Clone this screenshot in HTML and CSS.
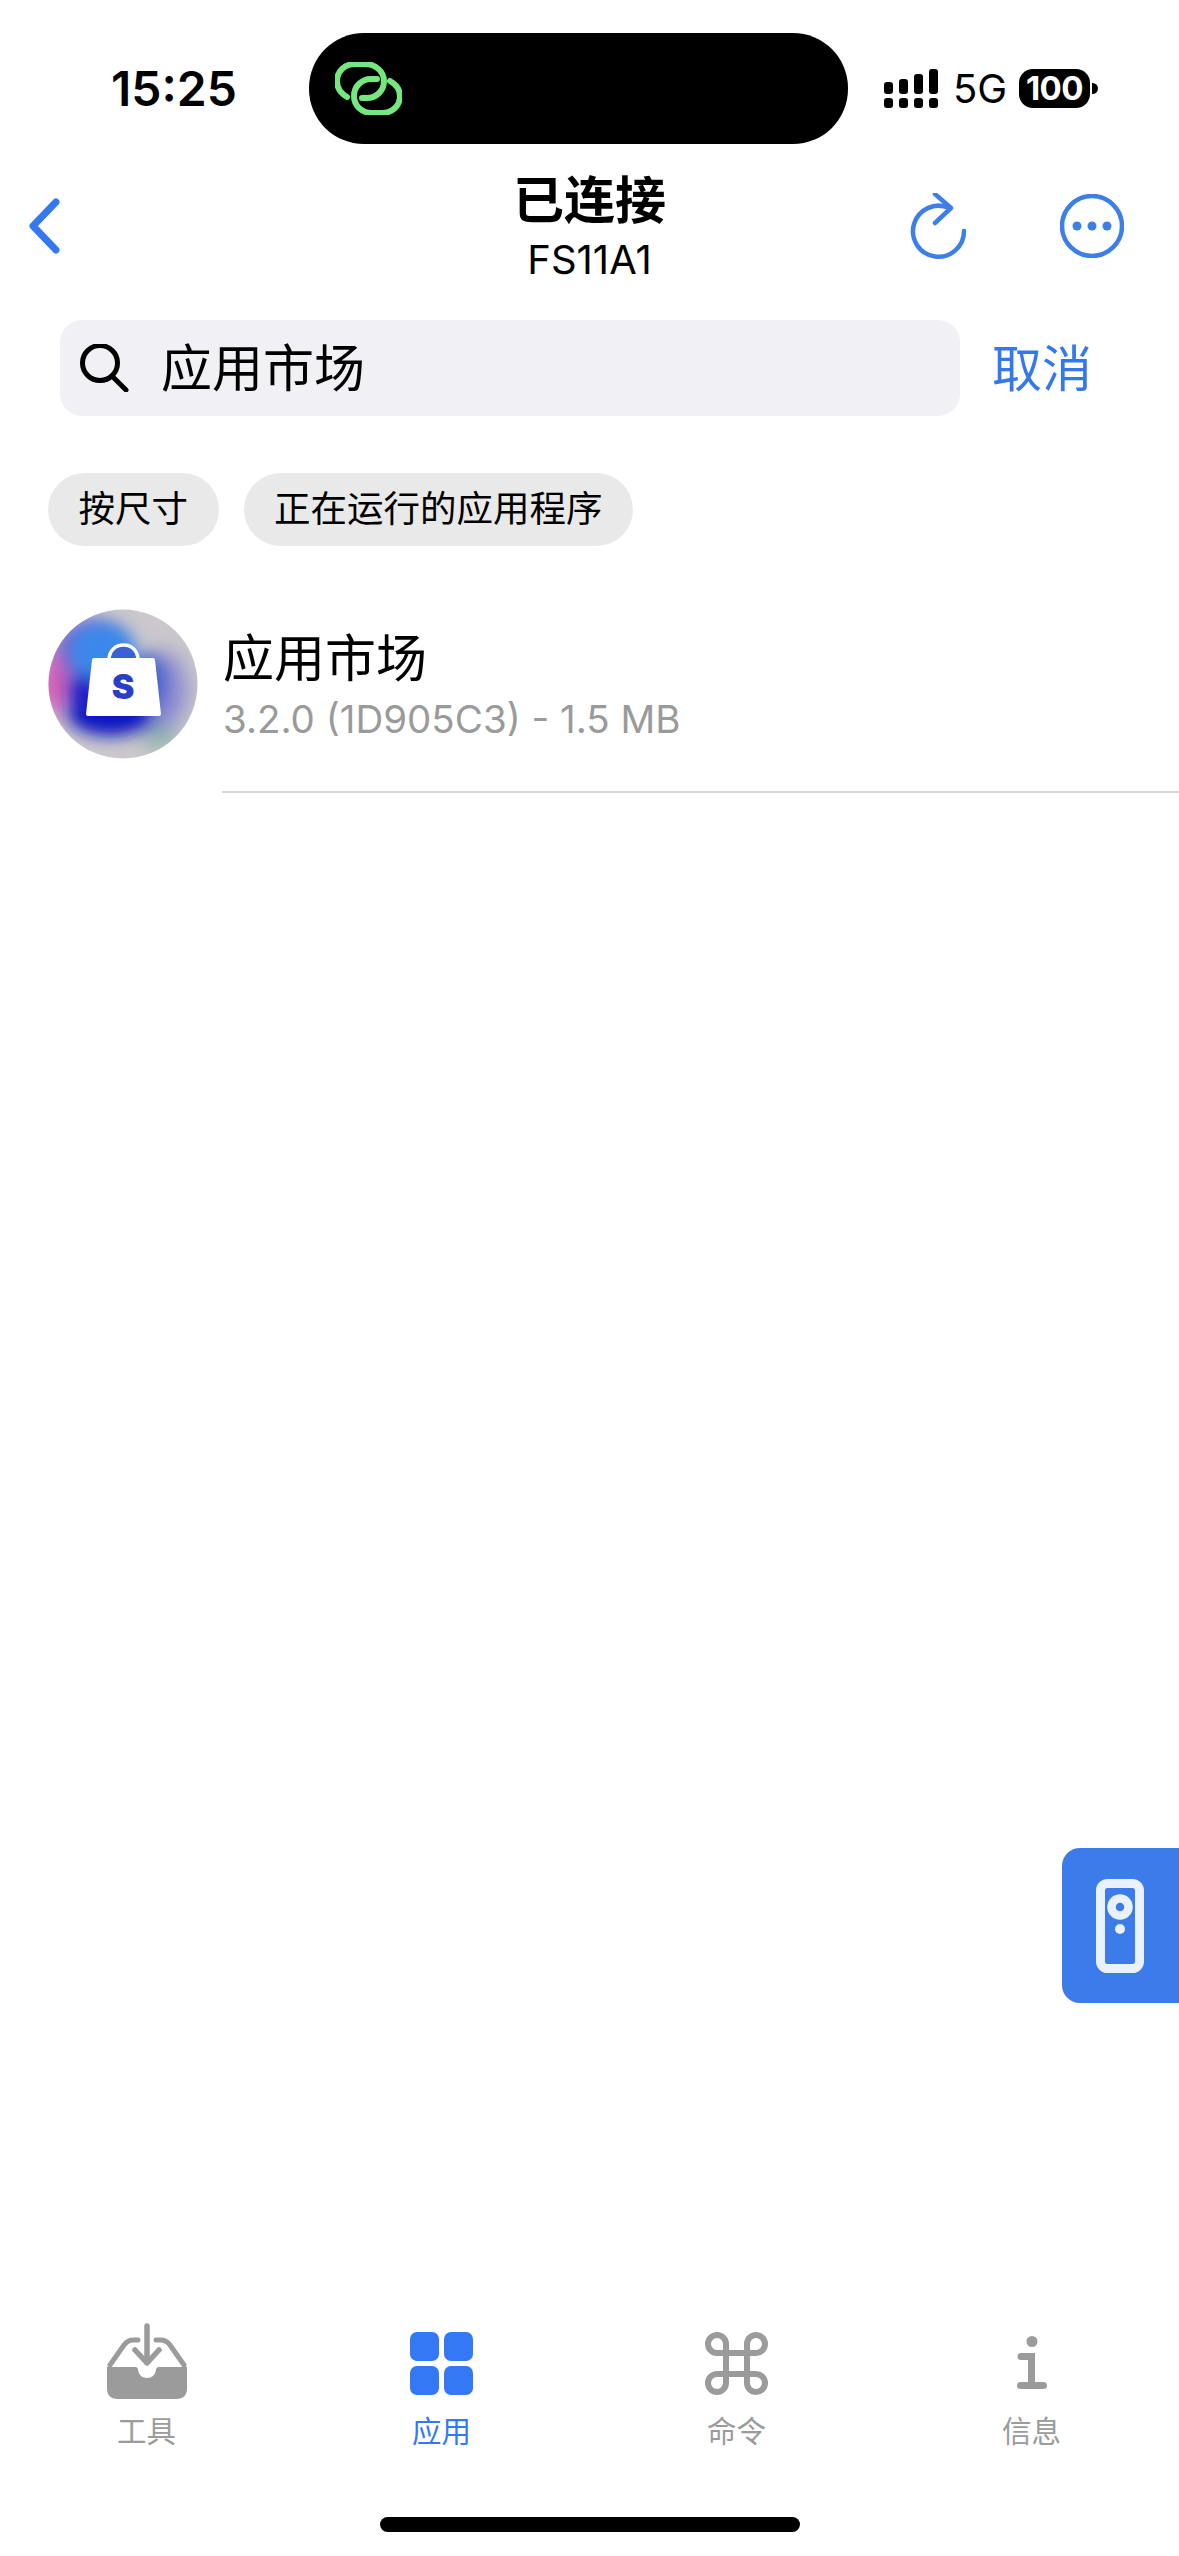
FILE: index.html
```html
<!DOCTYPE html>
<html lang="zh-CN">
<head>
<meta charset="utf-8">
<title>已连接</title>
<link rel="stylesheet" href="styles.css">
</head>
<body>
<div class="screen">
  <header class="status">
    <div class="time">15:25</div>
    <div class="island">
      <svg class="link" viewBox="335 62 67 53" width="67" height="53">
        <path d="M347 97C340 93 337 87 337 81C337 71 345 64 355 64H365C376 64 384 72 384 81C384 91 376 98 367 98H362"/>
        <path d="M390 81C397 85 400 91 400 96C400 106 392 113 382 113H372C361 113 354 105 354 96C354 86 362 79 371 79H377"/>
      </svg>
    </div>
    <div class="sys">
      <svg class="signal" viewBox="0 0 54 39" width="54" height="39">
        <rect x="0" y="29" width="9" height="10" rx="3"/><rect x="15" y="29" width="9" height="10" rx="3"/><rect x="30" y="29" width="9" height="10" rx="3"/><rect x="45" y="29" width="9" height="10" rx="3"/>
        <rect x="0" y="13" width="9" height="12" rx="3"/><rect x="15" y="10" width="9" height="15" rx="3"/><rect x="30" y="5" width="9" height="20" rx="3"/><rect x="45" y="0" width="9" height="25" rx="3"/>
      </svg>
      <span class="net">5G</span>
      <span class="batt">100</span>
      <span class="nub"></span>
    </div>
  </header>

  <nav class="nav">
    <svg class="back" viewBox="0 0 31 56" width="31" height="56"><path d="M27 4L4 28L27 52"/></svg>
    <div class="heading">
      <div class="title">已连接</div>
      <div class="device">FS11A1</div>
    </div>
    <div class="actions">
      <svg class="stroke-icon" viewBox="910 193 57 67" width="57" height="67">
        <path d="M964 231A25.500 25.500 0 1 1 949 208"/>
        <path d="M935 194L951 208L935 223"/>
      </svg>
      <svg class="stroke-icon" viewBox="0 0 64 64" width="64" height="64">
        <circle cx="32" cy="32" r="30"/>
        <circle class="dot" cx="17" cy="32" r="4.500"/><circle class="dot" cx="32" cy="32" r="4.500"/><circle class="dot" cx="47" cy="32" r="4.500"/>
      </svg>
    </div>
  </nav>

  <div class="search-row">
    <div class="search">
      <svg class="mag" viewBox="0 0 49 48" width="49" height="48">
        <circle cx="20" cy="19" r="17.500"/><path d="M32 32L46 46"/>
      </svg>
      <span class="query">应用市场</span>
    </div>
    <span class="cancel">取消</span>
  </div>

  <div class="chips">
    <span class="chip">按尺寸</span>
    <span class="chip">正在运行的应用程序</span>
  </div>

  <div class="app">
    <svg class="app-icon" viewBox="18 19 150 150" width="150" height="150">
      <defs>
        <clipPath id="disc"><circle cx="93" cy="94" r="74.500"/></clipPath>
        <filter id="b1" x="-60%" y="-60%" width="220%" height="220%"><feGaussianBlur stdDeviation="11"/></filter>
        <filter id="b2" x="-60%" y="-60%" width="220%" height="220%"><feGaussianBlur stdDeviation="8"/></filter>
      </defs>
      <g clip-path="url(#disc)">
        <rect x="18" y="19" width="150" height="150" fill="#cbc8cc"/>
        <g filter="url(#b1)">
          <ellipse cx="55" cy="72" rx="38" ry="42" fill="#7d62cc"/>
          <ellipse cx="25" cy="95" rx="17" ry="32" fill="#cf5cb8"/>
          <ellipse cx="132" cy="100" rx="25" ry="38" fill="#8584d2"/>
          <ellipse cx="128" cy="146" rx="16" ry="8" fill="#5ea58f"/>
        </g>
        <g filter="url(#b2)">
          <ellipse cx="72" cy="62" rx="34" ry="30" fill="#3b88ea"/>
          <ellipse cx="118" cy="92" rx="16" ry="28" fill="#3c62c8"/>
          <ellipse cx="80" cy="124" rx="42" ry="22" fill="#0f12c2"/>
          <ellipse cx="55" cy="104" rx="14" ry="20" fill="#1a1fc4"/>
        </g>
      </g>
      <path class="bag-in" d="M79 70C79 52 108 52 108 70Z"/>
      <path class="bag-handle" d="M79 70C79 50 108 50 108 70"/>
      <path class="bag" d="M64 68H123Q125 68 125 70L131 124Q131 126 129 126H58Q56 126 56 124L62 70Q62 68 64 68Z"/>
      <text class="bag-s" x="93" y="109" text-anchor="middle">S</text>
    </svg>
    <div class="app-text">
      <div class="app-name">应用市场</div>
      <div class="app-meta">3.2.0 (1D905C3) - 1.5 MB</div>
    </div>
  </div>
  <div class="divider"></div>

  <div class="remote">
    <svg viewBox="0 0 48 94" width="48" height="94">
      <rect class="r-body" x="4.500" y="4.500" width="39" height="85" rx="7"/>
      <circle class="r-ring" cx="24" cy="28" r="8.500"/>
      <circle class="r-dot" cx="24" cy="50" r="5"/>
    </svg>
  </div>

  <div class="tabs">
    <div class="tab">
      <div class="tab-icon">
        <svg class="tools" viewBox="0 0 80 80" width="80" height="80">
          <path class="t-line" d="M3 42L17 22Q21 17 26 17H31M77 42L63 22Q59 17 54 17H49"/>
          <path class="t-line t-arrow" d="M40 3V40M28 27L40 40L52 27"/>
          <path class="t-fill" d="M0 44H28Q31 44 31 47C32 52 35 55 40 55C45 55 48 52 49 47Q49 44 52 44H80V65Q80 76 69 76H11Q0 76 0 65Z"/>
        </svg>
      </div>
      <span class="tab-label">工具</span>
    </div>
    <div class="tab on">
      <div class="tab-icon">
        <div class="grid-icon"><i></i><i></i><i></i><i></i></div>
      </div>
      <span class="tab-label">应用</span>
    </div>
    <div class="tab">
      <div class="tab-icon">
        <svg class="cmd" viewBox="0 0 65 65" width="65" height="65">
          <path d="M22 13V52A9 9 0 1 1 13 43H52A9 9 0 1 1 43 52V13A9 9 0 1 1 52 22H13A9 9 0 1 1 22 13Z"/>
        </svg>
      </div>
      <span class="tab-label">命令</span>
    </div>
    <div class="tab">
      <div class="tab-icon">
        <svg class="info" viewBox="0 0 30 56" width="30" height="56">
          <circle cx="15" cy="6.500" r="5.500"/>
          <path d="M4 21.500H14.500V50M3.500 50.500H26.500"/>
        </svg>
      </div>
      <span class="tab-label">信息</span>
    </div>
  </div>
  <div class="home"></div>
</div>
</body>
</html>
```
FILE: styles.css
```css
* { box-sizing: border-box; }
html, body { margin: 0; padding: 0; background: #fff; }
body { font-family: Inter, "Noto Sans CJK SC", sans-serif; color: #000; }
.screen { position: relative; width: 1179px; height: 2556px; display: flex; flex-direction: column; overflow: hidden; background: #fff; }

.status { display: grid; grid-template-columns: 309px 539px 1fr; align-items: center; padding-top: 33px; height: 144px; }
.time { padding-left: 111px; font-size: 48px; font-weight: 600; line-height: 56px; letter-spacing: 0; }
.island { height: 111px; background: #000; border-radius: 55px; display: flex; align-items: center; padding: 0 0 0 26px; }
.link { fill: none; stroke: #74e77f; stroke-width: 6; stroke-linecap: round; }
.sys { display: flex; align-items: center; padding-left: 36px; }
.signal { fill: #000; }
.net { font-size: 40px; line-height: 40px; margin-left: 15px; width: 52px; letter-spacing: 0; white-space: nowrap; }
.batt { margin-left: 14px; width: 71px; height: 39px; border-radius: 14px; background: #000; color: #fff; font-size: 33px; font-weight: 700; line-height: 39px; text-align: center; letter-spacing: -0.5px; }
.nub { width: 6px; height: 11px; margin-left: 2px; background: #000; border-radius: 0 6px 6px 0; }

.nav { display: grid; grid-template-columns: 1fr auto 1fr; align-items: center; height: 164px; }
.back { fill: none; stroke: #3478f0; stroke-width: 7; stroke-linecap: round; stroke-linejoin: round; margin-left: 29px; }
.heading { text-align: center; }
.title { font-size: 51px; font-weight: 700; line-height: 66px; }
.device { margin-top: 2px; font-size: 40px; line-height: 48px; letter-spacing: 0; }
.actions { display: flex; justify-content: flex-end; align-items: center; gap: 93px; padding-right: 55px; }
.stroke-icon { fill: none; stroke: #3d7fe8; stroke-width: 4.500; stroke-linecap: round; stroke-linejoin: round; }
.stroke-icon .dot { fill: #3d7fe8; stroke: none; }

.search-row { display: flex; align-items: center; margin-top: 12px; padding-left: 60px; }
.search { display: flex; align-items: center; gap: 32px; width: 900px; height: 96px; padding-left: 20px; background: #f1f1f5; border-radius: 22px; }
.mag { fill: none; stroke: #000; stroke-width: 5; stroke-linecap: round; }
.query { font-size: 51px; line-height: 62px; padding-top: 2px; }
.cancel { margin-left: 32px; font-size: 50px; line-height: 62px; padding-top: 2px; color: #3478f0; }

.chips { display: flex; gap: 25px; margin-top: 57px; padding-left: 48px; }
.chip { height: 73px; padding: 0 30.500px; border-radius: 37px; background: #e9e9e9; font-size: 36.500px; line-height: 73px; }

.app { display: flex; align-items: center; gap: 25px; margin-top: 63px; padding-left: 48px; }
.app-icon { display: block; }
.bag { fill: #fff; }
.bag-in { fill: #3a62d6; }
.bag-handle { fill: none; stroke: #fff; stroke-width: 3.500; }
.bag-s { font-family: Inter, sans-serif; font-size: 34px; font-weight: 900; fill: #2a3fc8; }
.app-text { display: flex; flex-direction: column; padding-top: 5px; }
.app-name { font-size: 51px; line-height: 58px; }
.app-meta { margin-top: 6px; font-size: 38.500px; line-height: 50px; color: #9a9a9a; white-space: nowrap; }
.divider { height: 2px; margin: 32px 0 0 222px; background: #d6d6d6; }

.remote { position: absolute; top: 1848px; right: 0; width: 117px; height: 155px; display: flex; align-items: flex-start; padding: 31px 0 0 34px; background: #3b7cea; border-radius: 18px 0 0 18px; }
.r-body { fill: none; stroke: #e9f1fd; stroke-width: 9; }
.r-ring { fill: none; stroke: #e9f1fd; stroke-width: 8.500; }
.r-dot { fill: #e9f1fd; }

.tabs { display: grid; grid-template-columns: 295px 295px 295px 295px; margin: auto 0 0 -1px; }
.tab { display: flex; flex-direction: column; align-items: center; color: #9b9b9b; }
.tab.on { color: #3478f6; }
.tab-icon { display: flex; align-items: center; justify-content: center; height: 80px; }
.tab-label { margin-top: 8px; font-size: 29.500px; font-weight: 400; line-height: 40px; }
.tools { fill: none; }
.t-line { fill: none; stroke: #9b9b9b; stroke-width: 5; stroke-linecap: round; stroke-linejoin: round; }
.t-arrow { stroke-width: 5.500; }
.t-fill { fill: #9b9b9b; }
.grid-icon { display: grid; grid-template-columns: 29px 29px; grid-auto-rows: 29px; gap: 5px; }
.grid-icon i { background: #3478f6; border-radius: 7px; }
.cmd { fill: none; stroke: #9b9b9b; stroke-width: 6; }
.info { fill: #9b9b9b; stroke: none; }
.info path { fill: none; stroke: #9b9b9b; stroke-width: 7; stroke-linecap: round; }

.home { flex: none; width: 420px; height: 15px; margin: 66px auto 24px; background: #000; border-radius: 8px; }
```
